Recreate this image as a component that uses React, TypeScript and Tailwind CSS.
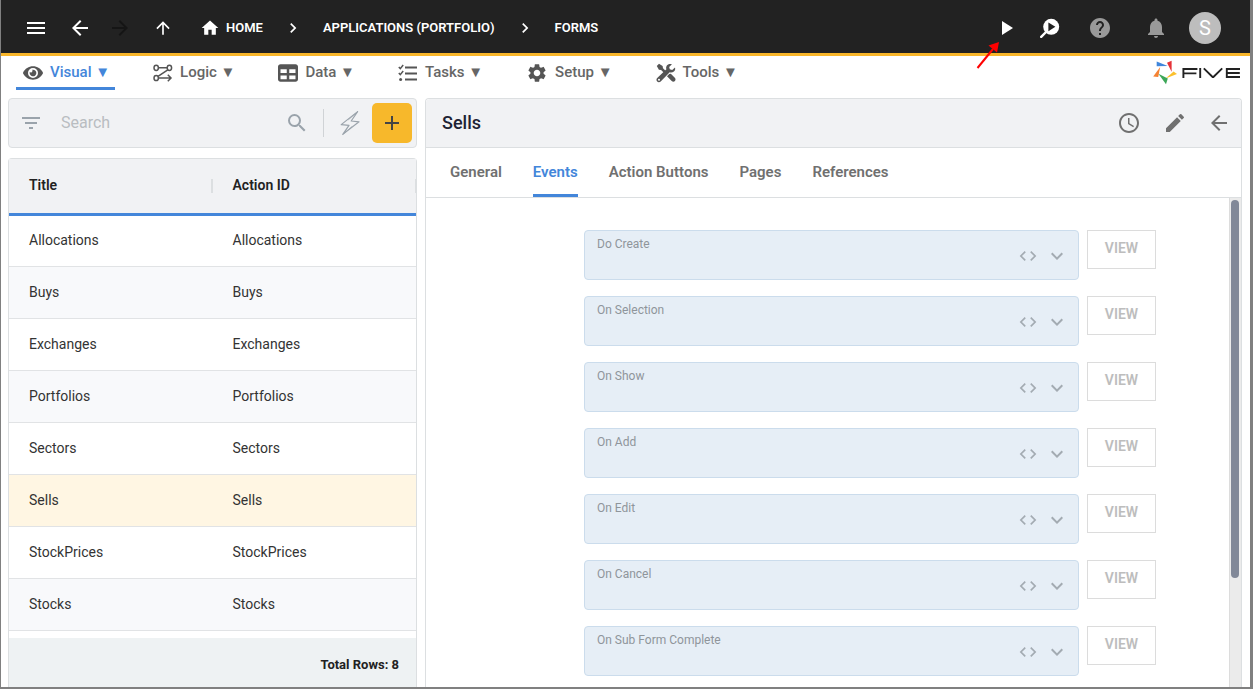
import { useState } from 'react';
import {
  MdAdd,
  MdArrowBack,
  MdArrowForward,
  MdArrowUpward,
  MdChevronRight,
  MdCode,
  MdEdit,
  MdFilterList,
  MdHelp,
  MdHome,
  MdKeyboardArrowDown,
  MdMenu,
  MdNotifications,
  MdOutlineSchedule,
  MdPlayArrow,
  MdSearch,
  MdSettings,
} from 'react-icons/md';
import { FaEye } from 'react-icons/fa';
import { FaTable } from 'react-icons/fa6';

const ROWS = ['Allocations', 'Buys', 'Exchanges', 'Portfolios', 'Sectors', 'Sells', 'StockPrices', 'Stocks'];

const TABS = ['General', 'Events', 'Action Buttons', 'Pages', 'References'];

const EVENTS = [
  'Do Create',
  'On Selection',
  'On Show',
  'On Add',
  'On Edit',
  'On Cancel',
  'On Sub Form Complete',
];

function InspectIcon() {
  return (
    <svg width="20" height="20" viewBox="0 0 20 20">
      <path d="M1.2 18.8 7 13" stroke="#fff" strokeWidth="2.4" strokeLinecap="round" />
      <circle cx="11.2" cy="8.8" r="8" fill="#fff" />
      <path d="M8.4 4.4v8.8l7-4.4z" fill="#222" />
    </svg>
  );
}

function LogicIcon() {
  return (
    <svg width="20" height="18" viewBox="0 0 20 18" fill="none" stroke="#555" strokeWidth="1.5">
      <ellipse cx="3.2" cy="3.8" rx="2.2" ry="2.6" />
      <ellipse cx="16.4" cy="3.8" rx="2.2" ry="2.6" />
      <ellipse cx="3.2" cy="14" rx="2.2" ry="2.6" />
      <path d="M5.4 3.8h8.8M14.8 5.8 5 12.4M5.4 14h12.2M14.8 10.8l3.2 3.2-3.2 3.2" />
    </svg>
  );
}

function TasksIcon() {
  return (
    <svg width="20" height="18" viewBox="0 0 20 18" fill="none" stroke="#555" strokeWidth="1.5">
      <path d="M7 3.500h12M7 9.500h12M7 15.500h12" strokeWidth="2" />
      <path d="m.8 3 1.500 1.600L5.200 1M.8 9l1.500 1.600L5.200 7" />
      <circle cx="2.600" cy="15.400" r="1.500" fill="#555" stroke="none" />
    </svg>
  );
}

function ToolsIcon() {
  return (
    <svg width="20" height="20" viewBox="0 0 20 20">
      <g fill="#555">
        <path d="M.8 3 3 .8l3.600 2.200.4 2.200 4 4-1.900 1.900-4-4-2.200-.4z" />
        <path d="m11 13.200 2.200-2.200 1.600-.2 4 4c1 1 .9 2.400.1 3.200s-2.200.9-3.200-.1l-4.200-4.200z" />
        <path d="M19 4.400 16.200 7l-2.400-.7-.6-2.300L15.900 1.200c-2-.7-4.200-.1-5.200 1.500-.7 1.200-.7 2.400-.3 3.600L1.200 15c-1 1-.9 2.600 0 3.500s2.500 1 3.500-.1l9-9.100c1.400.4 3.100.2 4.200-.8 1.200-1 1.600-2.600 1.100-4.100z" />
      </g>
      <circle cx="3" cy="16.800" r="1" fill="#fff" />
    </svg>
  );
}

function BoltIcon() {
  return (
    <svg width="20" height="26" viewBox="0 0 20 26" fill="none" stroke="#9aa3ab" strokeWidth="1.200" strokeLinejoin="round">
      <path d="M17.600 1.600 1.200 14.600l7.800.8-6.200 9L19 11.800l-7.800-.8z" />
      <path d="m17.600 1.600-9.200 8.200M2.800 24.400l9.400-8" strokeWidth="0.800" />
    </svg>
  );
}

function FiveLogo() {
  return (
    <svg width="88" height="25" viewBox="0 0 88 25" role="img" aria-label="Five">
      <path d="M3.700 1.600v4.600l11-.2z" fill="#3f86dc" />
      <path d="m18.600.8-4.600 2 4.600 9z" fill="#e53238" />
      <path d="m24 14-11.400 4.600 8-7.200z" fill="#fbc02d" />
      <path d="m5.400 13.800 9.400 4.800-1.800 5.600z" fill="#3da758" />
      <path d="M7.200 7 .2 16.400l5 .6z" fill="#f58233" />
      <g fill="none" stroke="#222" strokeWidth="1.900">
        <path d="M30.400 18V9h14M30.400 13.400h13M47.200 8v10M50.800 8.400l8.800 8.600h.8l8.800-8.600M87 9H73.800v8H87M73.800 13h13" />
      </g>
    </svg>
  );
}

const NAV = [
  { label: 'Visual', icon: <FaEye size={20} /> },
  { label: 'Logic', icon: <LogicIcon /> },
  { label: 'Data', icon: <FaTable size={20} /> },
  { label: 'Tasks', icon: <TasksIcon /> },
  { label: 'Setup', icon: <MdSettings size={22} /> },
  { label: 'Tools', icon: <ToolsIcon /> },
];

function Header() {
  return (
    <header className="relative flex h-14 shrink-0 items-center border-b-3 border-[#f9b62a] bg-[#222] pt-[3px] pr-[29px] pl-[23px] text-[13px] font-semibold text-white">
      <button aria-label="Menu"><MdMenu size={24} /></button>
      <button aria-label="Back" className="ml-5"><MdArrowBack size={24} /></button>
      <button aria-label="Forward" className="ml-4 text-[#151515]"><MdArrowForward size={24} /></button>
      <button aria-label="Up" className="ml-[21px]"><MdArrowUpward size={20} /></button>
      <nav className="ml-[27px] flex items-center">
        <a href="#home" className="flex items-center gap-[6px]">
          <MdHome size={20} />
          HOME
        </a>
        <MdChevronRight size={20} className="mx-5" />
        <a href="#applications">APPLICATIONS (PORTFOLIO)</a>
        <MdChevronRight size={20} className="mx-5" />
        <a href="#forms">FORMS</a>
      </nav>

      <div className="ml-auto flex items-center">
        <button aria-label="Run"><MdPlayArrow size={24} /></button>
        <button aria-label="Inspect" className="ml-[22px]"><InspectIcon /></button>
        <button aria-label="Help" className="ml-7 text-[#999]"><MdHelp size={24} /></button>
        <button aria-label="Notifications" className="ml-8 text-[#999]"><MdNotifications size={24} /></button>
        <button className="ml-[21px] size-8 rounded-full bg-[#bdbdbd] text-xl font-normal">S</button>
      </div>

      {/* pointer to the run button */}
      <svg className="absolute top-10 right-[248px] z-10" width="26" height="30" viewBox="0 0 26 30">
        <path d="M1.500 28 17 9" stroke="#f00" strokeWidth="2" />
        <path d="M23 2 21 12.500 12.500 5.500z" fill="#f00" />
      </svg>
    </header>
  );
}

function NavBar() {
  return (
    <div className="flex h-[42px] shrink-0 items-start justify-between pr-[9px] pl-[15px]">
      <nav className="flex gap-[31px]">
        {NAV.map((item, i) => (
          <button
            key={item.label}
            className={`flex h-[34px] items-center gap-[7px] border-b-3 pt-[2px] pr-[5px] pl-[7px] text-[15px] font-medium ${
              i === 0 ? 'border-[#4386da] text-[#4386da]' : 'border-transparent text-[#666]'
            }`}
          >
            <span className="flex text-[#555]">{item.icon}</span>
            <span>{item.label} ▼</span>
          </button>
        ))}
      </nav>
      <div className="pt-1"><FiveLogo /></div>
    </div>
  );
}

function RecordList() {
  const [selected, setSelected] = useState('Sells');

  return (
    <section className="flex w-[409px] shrink-0 flex-col gap-[10px]">
      <div className="flex h-[50px] shrink-0 items-center rounded border border-[#dcdfe1] bg-[#f1f2f4] pr-1 pl-[10px]">
        <MdFilterList size={24} className="text-[#9aa3ab]" />
        <input
          type="search"
          aria-label="Search"
          placeholder="Search"
          className="ml-[18px] min-w-0 flex-1 bg-transparent text-base outline-none placeholder:text-[#b9bdc1]"
        />
        <button aria-label="Run search" className="text-[#9aa3ab]"><MdSearch size={24} /></button>
        <span className="ml-[14px] h-7 w-px bg-[#d0d3d6]" />
        <button aria-label="Quick actions" className="ml-4"><BoltIcon /></button>
        <button aria-label="Add" className="ml-3 flex size-10 items-center justify-center rounded-[5px] bg-[#f7b82b] text-[#444]">
          <MdAdd size={24} />
        </button>
      </div>

      <div className="flex min-h-0 flex-1 flex-col rounded-t border border-b-0 border-[#dcdfe1]">
        <table className="w-full table-fixed text-left text-[14px] text-[#333]">
          <thead className="border-b-3 border-[#4386da] bg-[#f1f2f4] text-[#222]">
            <tr className="h-[55px]">
              <th className="font-semibold">
                <div className="flex items-center justify-between pl-5">Title<span className="h-[14px] w-[2px] bg-[#dcdfe1]" /></div>
              </th>
              <th className="font-semibold">
                <div className="flex items-center justify-between pl-5">Action ID<span className="h-[14px] w-px bg-[#dcdfe1]" /></div>
              </th>
            </tr>
          </thead>
          <tbody>
            {ROWS.map((row, i) => (
              <tr
                key={row}
                onClick={() => setSelected(row)}
                className={`h-[52px] border-b border-[#e1e3e5] ${
                  row === selected ? 'bg-[#fff6e3]' : i % 2 ? 'bg-[#f8f9fb]' : 'bg-white'
                }`}
              >
                <td className="pl-5">{row}</td>
                <td className="pl-5">{row}</td>
              </tr>
            ))}
          </tbody>
        </table>
        <footer className="mt-auto flex h-[49px] shrink-0 items-center justify-end bg-[#eef2f3] pt-1 pr-[17px] text-[13px] font-bold text-[#222]">
          Total Rows: {ROWS.length}
        </footer>
      </div>
    </section>
  );
}

function EventField({ label }: { label: string }) {
  return (
    <div className="flex items-start gap-2">
      <button className="flex h-[50px] flex-1 items-start justify-between rounded border border-[#cbdcec] bg-[#e6eef6] pr-[9px] pl-3 text-[12px] text-[#8f959b]">
        <span className="pt-1">{label}</span>
        <span className="flex items-center gap-[7px] pt-[13px] text-[#a3abb2]">
          <MdCode size={20} />
          <MdKeyboardArrowDown size={24} />
        </span>
      </button>
      <button className="h-[39px] w-[69px] border border-[#dcdcdc] pb-[3px] text-[14px] font-semibold text-[#bdbdbd]">VIEW</button>
    </div>
  );
}

function FormPanel() {
  const [tab, setTab] = useState('Events');

  return (
    <section className="flex min-w-0 flex-1 flex-col rounded-t border border-b-0 border-[#dcdfe1]">
      <div className="flex h-[49px] shrink-0 items-center rounded-t border-b border-[#dcdfe1] bg-[#f1f2f4] pr-[10px] pl-4 text-[#707070]">
        <h1 className="flex-1 pb-[2px] text-[18px] font-medium text-[#1d2333]">Sells</h1>
        <button aria-label="History"><MdOutlineSchedule size={24} /></button>
        <button aria-label="Edit" className="ml-[22px]"><MdEdit size={24} /></button>
        <button aria-label="Close" className="ml-5"><MdArrowBack size={24} /></button>
      </div>
      <div role="tablist" className="flex h-[50px] shrink-0 gap-[31px] border-b border-[#dcdfe1] px-6">
        {TABS.map((name) => (
          <button
            key={name}
            role="tab"
            aria-selected={name === tab}
            onClick={() => setTab(name)}
            className={`border-b-3 pt-[2px] text-[15px] font-semibold whitespace-nowrap ${
              name === tab ? 'border-[#4386da] text-[#4386da]' : 'border-transparent text-[#707070]'
            }`}
          >
            {name}
          </button>
        ))}
      </div>
      <div className="flex min-h-0 flex-1">
        <div className="flex min-w-0 flex-1 flex-col gap-4 overflow-hidden pt-8 pr-[73px] pl-[158px]">
          {EVENTS.map((name) => <EventField key={name} label={name} />)}
        </div>
        <div className="w-3 border-l border-[#dcdcdc] bg-[#ebebeb] px-px pt-[2px]">
          <div className="h-[378px] w-2 rounded-full bg-[#818898]" />
        </div>
      </div>
    </section>
  );
}

export default function App() {
  return (
    <div className="flex h-screen flex-col overflow-hidden border-r-3 border-b-2 border-l border-[#808080] bg-white font-[Roboto,sans-serif]">
      <Header />
      <NavBar />
      <main className="flex min-h-0 flex-1 gap-2 pr-2 pl-[7px]">
        <RecordList />
        <FormPanel />
      </main>
    </div>
  );
}
